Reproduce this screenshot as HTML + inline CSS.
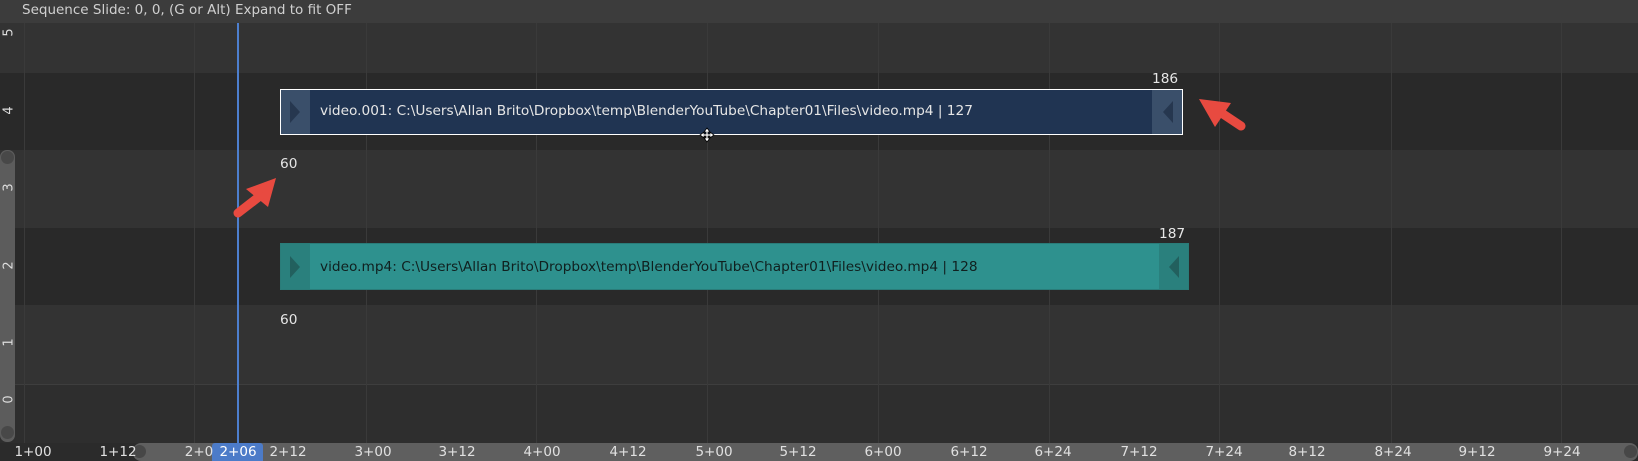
<!DOCTYPE html><html><head><style>
body{margin:0;width:1638px;height:461px;overflow:hidden;background:#2a2a2a;font-family:"DejaVu Sans","Liberation Sans",sans-serif;position:relative}
div{position:absolute;box-sizing:border-box}
.t{color:#e6e6e6;font-size:13.7px;white-space:nowrap}
.row{left:0;width:1638px}
.g{top:23px;height:420px;width:1px;background:#3a3a3a}
.rl{bottom:0;font-size:13.5px;color:#e0e0e0;transform:translateX(-50%);line-height:18px}
.yl{left:3px;color:#ddd;font-size:13px;transform:rotate(-90deg);width:12px;text-align:center}
</style></head><body>
<div style="left:0;top:0;width:1638px;height:23px;background:#3c3c3c"></div>
<div class="t" style="left:22px;top:2px;color:#d0d0d0;font-size:13.5px">Sequence Slide: 0, 0, (G or Alt) Expand to fit OFF</div>
<div class="row" style="top:23px;height:50px;background:#333"></div>
<div class="row" style="top:73px;height:77px;background:#292929"></div>
<div class="row" style="top:150px;height:78px;background:#333"></div>
<div class="row" style="top:228px;height:77px;background:#292929"></div>
<div class="row" style="top:305px;height:79px;background:#333"></div>
<div class="row" style="top:384px;height:1px;background:#3e3e3e"></div>
<div class="row" style="top:385px;height:58px;background:#2e2e2e"></div>
<div class="g" style="left:24px"></div><div class="g" style="left:194px"></div><div class="g" style="left:366px"></div><div class="g" style="left:536px"></div><div class="g" style="left:707px"></div><div class="g" style="left:878px"></div><div class="g" style="left:1049px"></div><div class="g" style="left:1219px"></div><div class="g" style="left:1391px"></div><div class="g" style="left:1561px"></div>
<div style="left:0;top:150px;width:15px;height:292px;background:#5c5c5c;border-radius:7px"></div>
<div style="left:1px;top:151px;width:13px;height:13px;border-radius:50%;background:#484848"></div>
<div style="left:1px;top:426px;width:13px;height:13px;border-radius:50%;background:#484848"></div>
<div class="yl" style="top:25px">5</div><div class="yl" style="top:103px">4</div><div class="yl" style="top:180px">3</div><div class="yl" style="top:258px">2</div><div class="yl" style="top:335px">1</div><div class="yl" style="top:392px">0</div>
<div style="left:280px;top:89px;width:903px;height:46px;background:#203452;border:1.5px solid #fff"></div>
<div style="left:281px;top:90px;width:29px;height:44px;background:#3a4f6a"></div>
<div style="left:1152px;top:90px;width:30px;height:44px;background:#3a4f6a"></div>
<svg style="position:absolute;left:290px;top:101px" width="12" height="22"><path d="M0 0 L10 11 L0 22Z" fill="#26374f"/></svg>
<svg style="position:absolute;left:1162px;top:101px" width="12" height="22"><path d="M11 0 L1 11 L11 22Z" fill="#26374f"/></svg>
<div class="t" style="left:320px;top:103px">video.001: C:\Users\Allan Brito\Dropbox\temp\BlenderYouTube\Chapter01\Files\video.mp4 | 127</div>
<div class="t" style="left:1152px;top:71px">186</div>
<div style="left:280px;top:243px;width:909px;height:47px;background:#2e918e;border:1px solid #2a7c79"></div>
<div style="left:281px;top:244px;width:29px;height:45px;background:#2a807d"></div>
<div style="left:1159px;top:244px;width:29px;height:45px;background:#2a807d"></div>
<svg style="position:absolute;left:290px;top:256px" width="12" height="22"><path d="M0 0 L10 11 L0 22Z" fill="#22605e"/></svg>
<svg style="position:absolute;left:1168px;top:256px" width="12" height="22"><path d="M11 0 L1 11 L11 22Z" fill="#22605e"/></svg>
<div class="t" style="left:320px;top:259px;color:#10201f">video.mp4: C:\Users\Allan Brito\Dropbox\temp\BlenderYouTube\Chapter01\Files\video.mp4 | 128</div>
<div class="t" style="left:1159px;top:226px">187</div>
<div class="t" style="left:280px;top:156px">60</div>
<div class="t" style="left:280px;top:312px">60</div>
<div style="left:237px;top:23px;width:2px;height:420px;background:#4d7fce"></div>
<div style="left:0;top:443px;width:1638px;height:18px;background:#2b2b2b"></div>
<div style="left:133px;top:443px;width:1505px;height:18px;background:#5f5f5f;border-radius:8px"></div>
<div style="left:133px;top:445px;width:13px;height:13px;border-radius:50%;background:#474747"></div>
<div style="left:1624px;top:445px;width:13px;height:13px;border-radius:50%;background:#474747"></div>
<div style="left:212px;top:443px;width:51px;height:18px;background:#4c7bc8;border-radius:3px 3px 0 0"></div>
<div style="left:0;top:443px;width:1638px;height:18px">
<div class="rl" style="left:33px">1+00</div><div class="rl" style="left:118px">1+12</div><div class="rl" style="left:199px">2+0</div><div class="rl" style="left:238px;color:#fff;background:#4c7bc8;padding:0 3px">2+06</div><div class="rl" style="left:288px">2+12</div><div class="rl" style="left:373px">3+00</div><div class="rl" style="left:457px">3+12</div><div class="rl" style="left:542px">4+00</div><div class="rl" style="left:628px">4+12</div><div class="rl" style="left:714px">5+00</div><div class="rl" style="left:798px">5+12</div><div class="rl" style="left:883px">6+00</div><div class="rl" style="left:969px">6+12</div><div class="rl" style="left:1053px">6+24</div><div class="rl" style="left:1139px">7+12</div><div class="rl" style="left:1224px">7+24</div><div class="rl" style="left:1307px">8+12</div><div class="rl" style="left:1393px">8+24</div><div class="rl" style="left:1477px">9+12</div><div class="rl" style="left:1562px">9+24</div>
</div>
<svg style="position:absolute;left:0;top:0" width="1638" height="461">
<path d="M1199 99 L1231 103 L1215 127Z" fill="#e84a40"/>
<line x1="1220" y1="112" x2="1241" y2="126" stroke="#e84a40" stroke-width="9" stroke-linecap="round"/>
<path d="M276 178 L268 207 L246 189Z" fill="#e84a40"/>
<line x1="260" y1="196" x2="238" y2="213" stroke="#e84a40" stroke-width="9" stroke-linecap="round"/>
<g transform="translate(707,135)" fill="#fff" stroke="#000" stroke-width="0.8">
<path d="M0 -7 L3 -3 L1 -3 L1 -1 L3 -1 L3 -3 L7 0 L3 3 L3 1 L1 1 L1 3 L3 3 L0 7 L-3 3 L-1 3 L-1 1 L-3 1 L-3 3 L-7 0 L-3 -3 L-3 -1 L-1 -1 L-1 -3 L-3 -3Z"/>
</g>
</svg>
</body></html>
